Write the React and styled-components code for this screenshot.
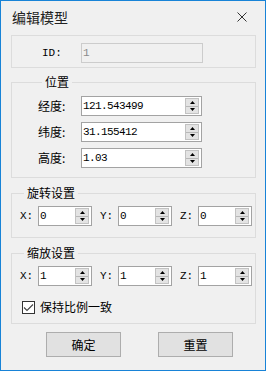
import React, { useState } from 'react';
import styled, { createGlobalStyle } from 'styled-components';

const GlobalStyle = createGlobalStyle`
    html, body {
        margin: 0;
        padding: 0;
        background: #f0f0f0;
    }
    * {
        box-sizing: border-box;
    }
`;

const CJK = `"Noto Sans CJK SC", "Noto Sans", sans-serif`;
const MONO = `"Liberation Mono", "DejaVu Sans Mono", monospace`;

const Window = styled.div`
    width: 266px;
    height: 371px;
    border: 1px solid #1883d7;
    background: #f0f0f0;
    display: flex;
    flex-direction: column;
    font-family: ${CJK};
    color: #000;
`;

const TitleBar = styled.div`
    height: 34px;
    display: flex;
    align-items: center;
    justify-content: space-between;
    padding: 0 18px 2px 11px;
`;

const Title = styled.div`
    font-size: 14px;
    line-height: 16px;
    color: #222;
`;

const Content = styled.div`
    display: flex;
    flex-direction: column;
    padding: 0 9px 0 10px;
`;

const Group = styled.fieldset`
    margin: ${p => p.$top || 0}px 0 0 0;
    padding: ${p => p.$pad};
    border: 1px solid #dcdcdc;
    min-width: 0;
    display: flex;
    flex-direction: column;
    gap: ${p => p.$gap || 0}px;
`;

const Legend = styled.legend`
    font-size: 12px;
    line-height: 14px;
    padding: 0 3px;
    margin-left: 4px;
`;

const Row = styled.div`
    display: flex;
    align-items: center;
    height: 20px;
`;

const Label = styled.span`
    width: ${p => p.$w}px;
    flex: none;
    font-family: ${p => (p.$latin ? MONO : CJK)};
    font-size: ${p => (p.$latin ? 11 : 12)}px;
    line-height: 14px;
`;

const Field = styled.div`
    width: ${p => p.$w}px;
    height: 20px;
    display: flex;
    align-items: stretch;
    border: 1px solid ${p => (p.$disabled ? '#cccccc' : '#a3a3a3')};
    background: ${p => (p.$disabled ? '#f0f0f0' : '#ffffff')};
`;

const FieldText = styled.span`
    flex: 1;
    padding-left: 1px;
    font-family: ${MONO};
    font-size: 11px;
    letter-spacing: -0.6px;
    line-height: 18px;
    color: ${p => (p.$disabled ? '#8a8a8a' : '#000')};
    overflow: hidden;
    white-space: nowrap;
`;

const Spin = styled.div`
    width: 14px;
    margin: 1px 2px 1px 0;
    display: flex;
    flex-direction: column;
    border: 1px solid #c2c2c2;
    background: #e3e3e3;
`;

const SpinHalf = styled.div`
    flex: 1;
    display: flex;
    align-items: center;
    justify-content: center;
    border-top: ${p => (p.$down ? '1px solid #b8b8b8' : 'none')};
`;

const Arrow = ({ down }) => (
    <svg width="5" height="3" viewBox="0 0 5 3">
        {down ? <path d="M0 0H5L2.5 3Z" fill="#000" /> : <path d="M0 3H5L2.5 0Z" fill="#000" />}
    </svg>
);

const SpinBox = ({ value, width }) => (
    <Field $w={width}>
        <FieldText>{value}</FieldText>
        <Spin>
            <SpinHalf><Arrow /></SpinHalf>
            <SpinHalf $down><Arrow down /></SpinHalf>
        </Spin>
    </Field>
);

const AxisRow = styled.div`
    display: flex;
    align-items: center;
    gap: 8px;
    height: 20px;
`;

const AxisCell = styled.div`
    display: flex;
    align-items: center;
`;

const CheckRow = styled.label`
    display: flex;
    align-items: center;
    gap: 5px;
    margin-top: 14px;
    padding-left: 2px;
    font-size: 12px;
    line-height: 14px;
    cursor: pointer;
`;

const Box = styled.span`
    width: 13px;
    height: 13px;
    border: 1px solid #333;
    background: #fff;
    display: flex;
    align-items: center;
    justify-content: center;
`;

const Buttons = styled.div`
    display: flex;
    gap: 37px;
    margin-top: 8px;
    padding-left: 35px;
`;

const Button = styled.button`
    width: 75px;
    height: 25px;
    border: 1px solid #adadad;
    background: #e1e1e1;
    font-family: ${CJK};
    font-size: 12px;
    color: #000;
    padding: 0;
    cursor: pointer;
`;

const CloseIcon = () => (
    <svg width="10" height="10" viewBox="0 0 10 10">
        <path d="M0.5 0.5L9.5 9.5M9.5 0.5L0.5 9.5" stroke="#333" strokeWidth="1" />
    </svg>
);

const axes = ['X', 'Y', 'Z'];

const AxisInputs = ({ value }) => (
    <AxisRow>
        {axes.map(a => (
            <AxisCell key={a}>
                <Label $latin $w={18}>{a}:</Label>
                <SpinBox value={value} width={54} />
            </AxisCell>
        ))}
    </AxisRow>
);

const App = () => {
    const [keepRatio, setKeepRatio] = useState(true);
    const position = [
        { label: '经度:', value: '121.543499' },
        { label: '纬度:', value: '31.155412' },
        { label: '高度:', value: '1.03' },
    ];

    return (
        <>
            <GlobalStyle />
            <Window>
                <TitleBar>
                    <Title>编辑模型</Title>
                    <CloseIcon />
                </TitleBar>
                <Content>
                    <Group $pad="7px 0 4px 30px">
                        <Row>
                            <Label $latin $w={39}>ID:</Label>
                            <Field $w={122} $disabled>
                                <FieldText $disabled>1</FieldText>
                            </Field>
                        </Row>
                    </Group>

                    <Group $top={7} $pad="7px 0 9px 26px" $gap={6}>
                        <Legend>位置</Legend>
                        {position.map(p => (
                            <Row key={p.label}>
                                <Label $w={43}>{p.label}</Label>
                                <SpinBox value={p.value} width={121} />
                            </Row>
                        ))}
                    </Group>

                    <Group $top={8} $pad="6px 0 11px 8px">
                        <Legend>旋转设置</Legend>
                        <AxisInputs value="0" />
                    </Group>

                    <Group $top={8} $pad="6px 0 9px 8px">
                        <Legend>缩放设置</Legend>
                        <AxisInputs value="1" />
                        <CheckRow onClick={() => setKeepRatio(!keepRatio)}>
                            <Box>
                                {keepRatio && (
                                    <svg width="11" height="9" viewBox="0 0 11 9">
                                        <path d="M1 4.5L4 7.5L10 1.5" stroke="#444" strokeWidth="1.1" fill="none" />
                                    </svg>
                                )}
                            </Box>
                            保持比例一致
                        </CheckRow>
                    </Group>

                    <Buttons>
                        <Button>确定</Button>
                        <Button>重置</Button>
                    </Buttons>
                </Content>
            </Window>
        </>
    );
};

export default App;
